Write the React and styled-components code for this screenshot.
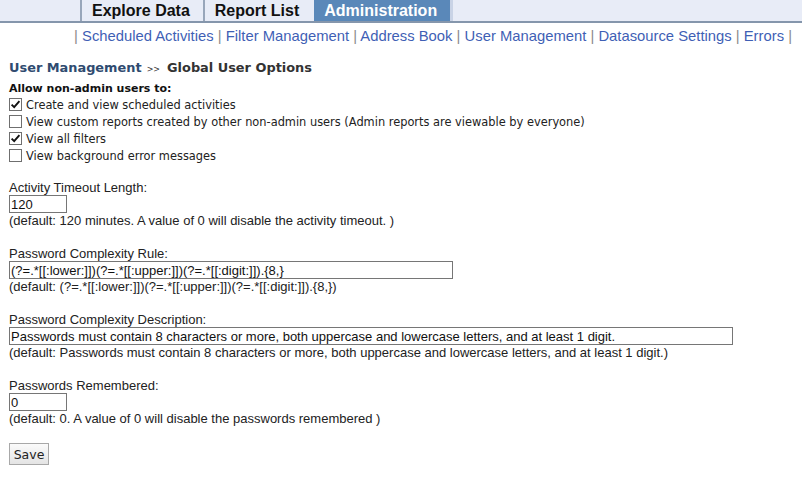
import React from "react";
import styled, { createGlobalStyle } from "styled-components";

const Global = createGlobalStyle`
  html, body { margin: 0; padding: 0; background: #fff; }
  body { font-family: "Liberation Sans", Arial, sans-serif; color: #222; }
`;

const TopBar = styled.div`
  height: 21px;
  background: #e8ecf7;
  border-bottom: 2px solid #8596ac;
  display: flex;
  padding-left: 80px;
`;

const Tab = styled.div`
  display: flex;
  align-items: center;
  padding: 0 13px 0 10px;
  border-left: 2px solid ${(p) => (p.$active ? "#e8ecf7" : "#98a6ba")};
  border-right: ${(p) => (p.$active ? "3px solid #c9d3e6" : "none")};
  background: ${(p) => (p.$active ? "#5a88b9" : "transparent")};
  color: ${(p) => (p.$active ? "#fff" : "#111")};
  font: bold 16px "Liberation Sans", Arial, sans-serif;
  line-height: 21px;
  white-space: nowrap;
`;

const SubMenu = styled.div`
  margin-top: 5px;
  height: 18px;
  line-height: 18px;
  text-align: right;
  padding-right: 10px;
  font: 14.8px "Liberation Sans", Arial, sans-serif;
  color: #8a8a8a;
  white-space: nowrap;
`;

const SubLink = styled.a`
  color: #3f5fb5;
  text-decoration: none;
`;

const Content = styled.div`
  padding: 0 9px;
`;

const Heading = styled.div`
  margin-top: 14px;
  height: 18px;
  line-height: 18px;
  font: bold 12.9px "DejaVu Sans", Verdana, sans-serif;
  color: #333;
  white-space: nowrap;
`;

const Crumb = styled.span`
  color: #2f4b70;
`;

const Arrows = styled.span`
  font: 8px "DejaVu Sans", Verdana, sans-serif;
  color: #333;
  margin: 0 7px 0 5px;
`;

const SectionTitle = styled.div`
  margin-top: 3px;
  font: bold 11px "DejaVu Sans", Verdana, sans-serif;
  line-height: 15px;
  color: #111;
`;

const CheckRow = styled.div`
  display: flex;
  align-items: center;
  height: 17px;
  gap: 4px;
  font: 11.4px "DejaVu Sans", Verdana, sans-serif;
  color: #222;
  white-space: nowrap;
`;

const Box = styled.span`
  width: 13px;
  height: 13px;
  box-sizing: border-box;
  border: 1px solid #6f6f6f;
  background: #fff;
  display: inline-flex;
  align-items: center;
  justify-content: center;
  flex: none;
`;

const CheckBox = ({ checked }) => (
  <Box>
    {checked && (
      <svg width="11" height="11" viewBox="0 0 11 11">
        <path d="M1.6 5.6 L4.2 8.2 L9.4 2.2" fill="none" stroke="#111" strokeWidth="1.9" />
      </svg>
    )}
  </Box>
);

const Field = styled.div`
  margin-top: ${(p) => p.$top}px;
`;

const Label = styled.div`
  font: 13px "Liberation Sans", Arial, sans-serif;
  line-height: 15px;
  color: #222;
`;

const TextInput = styled.input`
  display: block;
  box-sizing: border-box;
  width: ${(p) => p.$w}px;
  height: 18px;
  margin: 0;
  padding: 0 1px;
  border: 1px solid #767676;
  border-radius: 0;
  font: 13px "Liberation Sans", Arial, sans-serif;
  color: #111;
  background: #fff;
  outline: none;
`;

const Hint = styled.div`
  font: 13px "Liberation Sans", Arial, sans-serif;
  line-height: 15px;
  color: #222;
  white-space: nowrap;
`;

const SaveButton = styled.button`
  margin-top: 17px;
  width: 40px;
  height: 22px;
  box-sizing: border-box;
  border: 1px solid #a8a8a8;
  border-radius: 0;
  background: linear-gradient(#fbfbfb, #e4e4e4);
  font: 12.5px "DejaVu Sans", Verdana, sans-serif;
  color: #222;
  padding: 0;
`;

const links = [
  "Scheduled Activities",
  "Filter Management",
  "Address Book",
  "User Management",
  "Datasource Settings",
  "Errors",
];

const checks = [
  [true, "Create and view scheduled activities"],
  [false, "View custom reports created by other non-admin users (Admin reports are viewable by everyone)"],
  [true, "View all filters"],
  [false, "View background error messages"],
];

const fields = [
  {
    top: 16,
    label: "Activity Timeout Length:",
    value: "120",
    w: 58,
    hint: "(default: 120 minutes. A value of 0 will disable the activity timeout. )",
  },
  {
    top: 18,
    label: "Password Complexity Rule:",
    value: "(?=.*[[:lower:]])(?=.*[[:upper:]])(?=.*[[:digit:]]).{8,}",
    w: 444,
    hint: "(default: (?=.*[[:lower:]])(?=.*[[:upper:]])(?=.*[[:digit:]]).{8,})",
  },
  {
    top: 18,
    label: "Password Complexity Description:",
    value:
      "Passwords must contain 8 characters or more, both uppercase and lowercase letters, and at least 1 digit.",
    w: 724,
    hint:
      "(default: Passwords must contain 8 characters or more, both uppercase and lowercase letters, and at least 1 digit.)",
  },
  {
    top: 18,
    label: "Passwords Remembered:",
    value: "0",
    w: 58,
    hint: "(default: 0. A value of 0 will disable the passwords remembered )",
  },
];

export default function App() {
  return (
    <>
      <Global />
      <TopBar>
        <Tab>Explore Data</Tab>
        <Tab>Report List</Tab>
        <Tab $active>Administration</Tab>
      </TopBar>
      <SubMenu>
        |{" "}
        {links.map((l) => (
          <React.Fragment key={l}>
            <SubLink href="#">{l}</SubLink> |{" "}
          </React.Fragment>
        ))}
      </SubMenu>
      <Content>
        <Heading>
          <Crumb>User Management</Crumb>
          <Arrows>&gt;&gt;</Arrows>
          Global User Options
        </Heading>
        <SectionTitle>Allow non-admin users to:</SectionTitle>
        {checks.map(([c, t]) => (
          <CheckRow key={t}>
            <CheckBox checked={c} />
            <span>{t}</span>
          </CheckRow>
        ))}
        {fields.map((f) => (
          <Field key={f.label} $top={f.top}>
            <Label>{f.label}</Label>
            <TextInput $w={f.w} defaultValue={f.value} />
            <Hint>{f.hint}</Hint>
          </Field>
        ))}
        <SaveButton>Save</SaveButton>
      </Content>
    </>
  );
}
